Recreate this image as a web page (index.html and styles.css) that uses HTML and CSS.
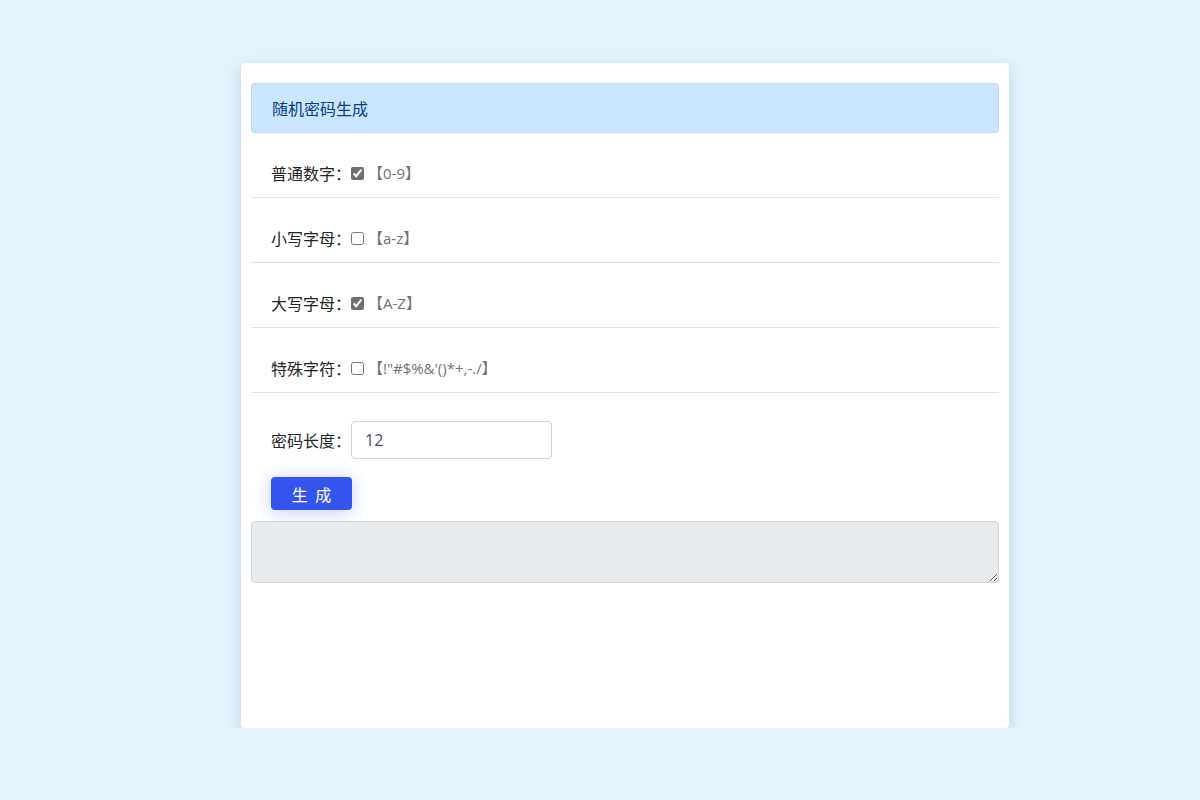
FILE: index.html
```html
<!DOCTYPE html>
<html lang="zh-CN">
<head>
<meta charset="utf-8">
<title>随机密码生成</title>
<link rel="stylesheet" href="styles.css">
</head>
<body>
<div class="card">
  <div class="alert">随机密码生成</div>
  <div class="row">
    <span class="label">普通数字：</span>
    <input type="checkbox" class="check" checked>
    <span class="hint">【0-9】</span>
  </div>
  <div class="row">
    <span class="label">小写字母：</span>
    <input type="checkbox" class="check">
    <span class="hint">【a-z】</span>
  </div>
  <div class="row">
    <span class="label">大写字母：</span>
    <input type="checkbox" class="check" checked>
    <span class="hint">【A-Z】</span>
  </div>
  <div class="row">
    <span class="label">特殊字符：</span>
    <input type="checkbox" class="check">
    <span class="hint">【!"#$%&amp;'()*+,-./】</span>
  </div>
  <div class="len-row">
    <span class="label">密码长度：</span>
    <input type="text" class="len-input" value="12">
  </div>
  <div class="btn-row">
    <button class="btn">生 成</button>
  </div>
  <textarea class="output" readonly></textarea>
</div>
</body>
</html>
```
FILE: styles.css
```css
html, body {
  margin: 0;
  padding: 0;
}
body {
  background: #e3f4fd;
  font-family: "Open Sans", "Noto Sans CJK SC", sans-serif;
  font-size: 16px;
  color: #212529;
  line-height: 24px;
}
.card {
  box-sizing: border-box;
  width: 768px;
  height: 665px;
  margin: 63px 0 0 241px;
  padding: 20px 10px;
  background: #fff;
  border-radius: 4px;
  box-shadow: 0 5px 15px rgba(40, 90, 130, 0.2);
}
.alert {
  padding: 12px 20px;
  background: #cce5ff;
  border: 1px solid #b8daff;
  border-radius: 4px;
  color: #004085;
  font-family: "Noto Sans CJK SC", sans-serif;
}
.row {
  display: flex;
  align-items: center;
  padding: 28px 20px 12px;
  border-bottom: 1px solid #dee2e6;
}
.label {
  width: 80px;
  flex: none;
  font-family: "Noto Sans CJK SC", sans-serif;
}
.check {
  width: 13px;
  height: 13px;
  margin: 0;
  accent-color: #6f6f6f;
}
.hint {
  margin-left: 4px;
  font-size: 15px;
  color: #6c757d;
}
.len-row {
  display: flex;
  align-items: center;
  padding: 28px 20px 0;
}
.len-input {
  box-sizing: border-box;
  width: 201px;
  height: 38px;
  padding: 6px 13px;
  border: 1px solid #ced4da;
  border-radius: 4px;
  font-family: inherit;
  font-size: 16px;
  color: #495057;
  outline: none;
}
.btn-row {
  padding: 18px 20px 11px;
}
.btn {
  display: block;
  box-sizing: border-box;
  width: 81px;
  height: 33px;
  padding: 0;
  border: none;
  border-radius: 4px;
  background: #3355ee;
  color: #fff;
  font-family: "Noto Sans CJK SC", sans-serif;
  font-size: 16px;
  word-spacing: 4px;
  box-shadow: 0 2px 18px rgba(51, 85, 238, 0.3);
  cursor: pointer;
}
.output {
  display: block;
  box-sizing: border-box;
  width: 748px;
  height: 62px;
  margin: 0;
  background: #e9ecef;
  border: 1px solid #ced4da;
  border-radius: 4px;
  resize: vertical;
}
```
